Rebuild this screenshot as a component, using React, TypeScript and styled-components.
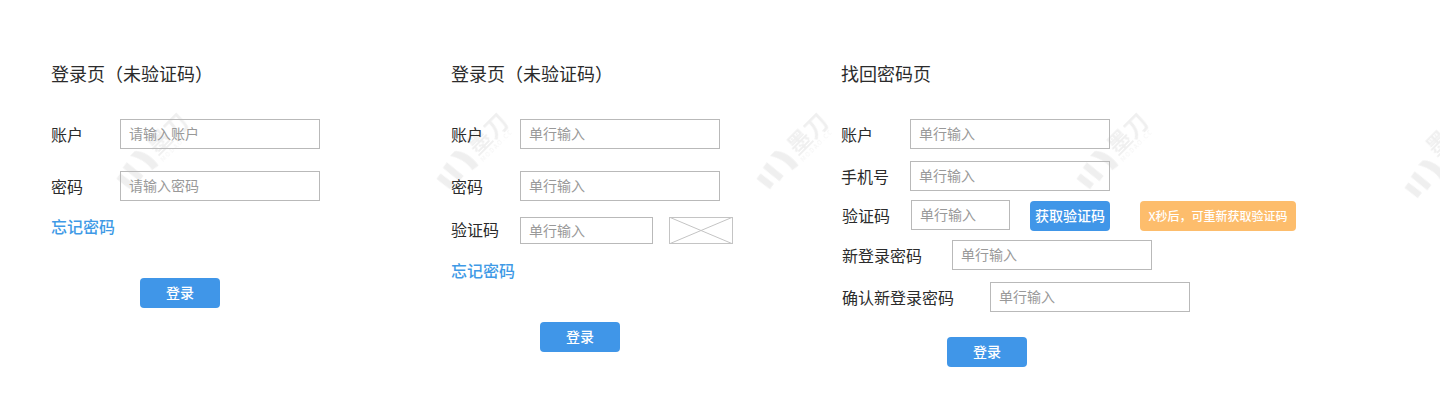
import styled, { createGlobalStyle } from "styled-components";

const LogoMark = () => (
  <svg width="44" height="27" viewBox="0 0 38 24" fill="#000">
    <path d="M1 6 L7 5 L9 20 L3 21 Z" />
    <path d="M12 3 L18 2 L20 21 L14 22 Z" />
    <path d="M24 0 L30 0 C35 4 38 14 36 24 L29 23 C31 15 28 6 24 0 Z" />
  </svg>
);

const App = () => {
  return (
    <Page>
      <GlobalStyle />
      <WatermarkLayer>
        {[0, 1, 2, 3, 4].map((i) => (
          <Watermark key={i} $index={i}>
            <LogoMark />
            <WatermarkText>
              <WatermarkName>墨刀</WatermarkName>
              <WatermarkSub>MODAO.CC</WatermarkSub>
            </WatermarkText>
          </Watermark>
        ))}
      </WatermarkLayer>

      <Column $width={400}>
        <Title>登录页（未验证码）</Title>
        <Row $top={33}>
          <Label $width={68}>账户</Label>
          <Input placeholder="请输入账户" />
        </Row>
        <Row $top={22}>
          <Label $width={68}>密码</Label>
          <Input placeholder="请输入密码" />
        </Row>
        <ForgotLink $top={14}>忘记密码</ForgotLink>
        <SubmitButton $top={41} $left={88}>登录</SubmitButton>
      </Column>

      <Column $width={390}>
        <Title>登录页（未验证码）</Title>
        <Row $top={33}>
          <Label $width={68}>账户</Label>
          <Input placeholder="单行输入" />
        </Row>
        <Row $top={22}>
          <Label $width={68}>密码</Label>
          <Input placeholder="单行输入" />
        </Row>
        <Row $top={16}>
          <Label $width={68} $raise={2}>验证码</Label>
          <Input placeholder="单行输入" $width={133} $height={27} />
          <CaptchaBox viewBox="0 0 64 27" preserveAspectRatio="none">
            <rect x="0.5" y="0.5" width="63" height="26" fill="#fff" stroke="#c4c4c4" />
            <path d="M0 0 L64 27 M64 0 L0 27" stroke="#c4c4c4" strokeWidth="1" />
          </CaptchaBox>
        </Row>
        <ForgotLink $top={15}>忘记密码</ForgotLink>
        <SubmitButton $top={41} $left={88}>登录</SubmitButton>
      </Column>

      <Column $width={500}>
        <Title>找回密码页</Title>
        <Row $top={33}>
          <Label $width={68}>账户</Label>
          <Input placeholder="单行输入" />
        </Row>
        <Row $top={12}>
          <Label $width={68}>手机号</Label>
          <Input placeholder="单行输入" />
        </Row>
        <Row $top={9}>
          <Label $width={69} $flush>验证码</Label>
          <Input placeholder="单行输入" $width={99} />
          <CodeButton>获取验证码</CodeButton>
          <CountdownButton>X秒后，可重新获取验证码</CountdownButton>
        </Row>
        <Row $top={10}>
          <Label $width={110} $flush>新登录密码</Label>
          <Input placeholder="单行输入" />
        </Row>
        <Row $top={12}>
          <Label $width={148} $flush>确认新登录密码</Label>
          <Input placeholder="单行输入" />
        </Row>
        <SubmitButton $top={25} $left={105}>登录</SubmitButton>
      </Column>
    </Page>
  );
};

export default App;

const GlobalStyle = createGlobalStyle`
  html, body {
    margin: 0;
    padding: 0;
    background: #fff;
  }
  body {
    font-family: "Noto Sans CJK SC", "Noto Sans", sans-serif;
    color: #2b2b2b;
  }
`;

const Page = styled.div`
  position: relative;
  display: flex;
  width: 1440px;
  height: 400px;
  padding: 62px 0 0 52px;
  box-sizing: border-box;
  overflow: hidden;
`;

const WatermarkLayer = styled.div`
  position: absolute;
  inset: 0;
  pointer-events: none;
  overflow: hidden;
`;

const Watermark = styled.div<{ $index: number }>`
  position: absolute;
  left: ${(p) => 109 + p.$index * 320}px;
  top: 174px;
  display: flex;
  align-items: center;
  gap: 3px;
  opacity: 0.06;
  filter: blur(0.4px);
  transform: rotate(-45deg);
  transform-origin: left top;
`;

const WatermarkText = styled.div`
  display: flex;
  flex-direction: column;
  line-height: 1;
`;

const WatermarkName = styled.span`
  font-size: 23px;
  font-weight: 700;
  color: #000;
`;

const WatermarkSub = styled.span`
  font-size: 6px;
  letter-spacing: 1.5px;
  color: #000;
  margin-top: 2px;
`;

const Column = styled.div<{ $width: number }>`
  position: relative;
  flex: none;
  width: ${(p) => p.$width}px;
`;

const Title = styled.h2`
  margin: 0 0 0 -1px;
  height: 24px;
  font-size: 18px;
  font-weight: 400;
  line-height: 22px;
  color: #2b2b2b;
`;

const Row = styled.div<{ $top: number }>`
  display: flex;
  align-items: center;
  margin-top: ${(p) => p.$top}px;
`;

const Label = styled.label<{ $width: number; $raise?: number; $flush?: boolean }>`
  flex: none;
  width: ${(p) => (p.$flush ? p.$width : p.$width + 1)}px;
  margin-left: ${(p) => (p.$flush ? 0 : -1)}px;
  transform: translateY(${(p) => -(p.$raise ?? 0)}px);
  font-size: 16px;
  line-height: 22px;
  color: #2b2b2b;
`;

const Input = styled.input<{ $width?: number; $height?: number }>`
  flex: none;
  width: ${(p) => p.$width ?? 200}px;
  height: ${(p) => p.$height ?? 30}px;
  padding: 0 8px 2px;
  box-sizing: border-box;
  border: 1px solid #b9b9b9;
  border-radius: 0;
  outline: none;
  background: transparent;
  font-family: inherit;
  font-size: 14px;
  color: #333;
  &::placeholder {
    color: #999;
    opacity: 1;
  }
`;

const CaptchaBox = styled.svg`
  flex: none;
  width: 64px;
  height: 27px;
  margin-left: 16px;
`;

const ForgotLink = styled.a<{ $top: number }>`
  display: block;
  width: fit-content;
  margin: ${(p) => p.$top}px 0 0 -1px;
  font-size: 16px;
  font-weight: 500;
  line-height: 22px;
  color: #409ae6;
`;

const SubmitButton = styled.button<{ $top: number; $left: number }>`
  display: block;
  width: 80px;
  height: 30px;
  margin: ${(p) => p.$top}px 0 0 ${(p) => p.$left}px;
  padding: 0 0 2px;
  border: none;
  border-radius: 4px;
  background: #4096e8;
  color: #fff;
  font-family: inherit;
  font-size: 14px;
  font-weight: 500;
`;

const CodeButton = styled.button`
  flex: none;
  width: 80px;
  height: 30px;
  margin-left: 20px;
  padding: 0 0 2px;
  border: none;
  border-radius: 4px;
  background: #4096e8;
  color: #fff;
  font-family: inherit;
  font-size: 14px;
  font-weight: 500;
  transform: translateY(1px);
`;

const CountdownButton = styled.button`
  flex: none;
  width: 156px;
  height: 30px;
  margin-left: 30px;
  padding: 0 0 2px;
  border: none;
  border-radius: 4px;
  background: #fdbd6c;
  color: #fff;
  font-family: inherit;
  font-size: 12px;
  font-weight: 500;
  transform: translateY(1px);
`;
